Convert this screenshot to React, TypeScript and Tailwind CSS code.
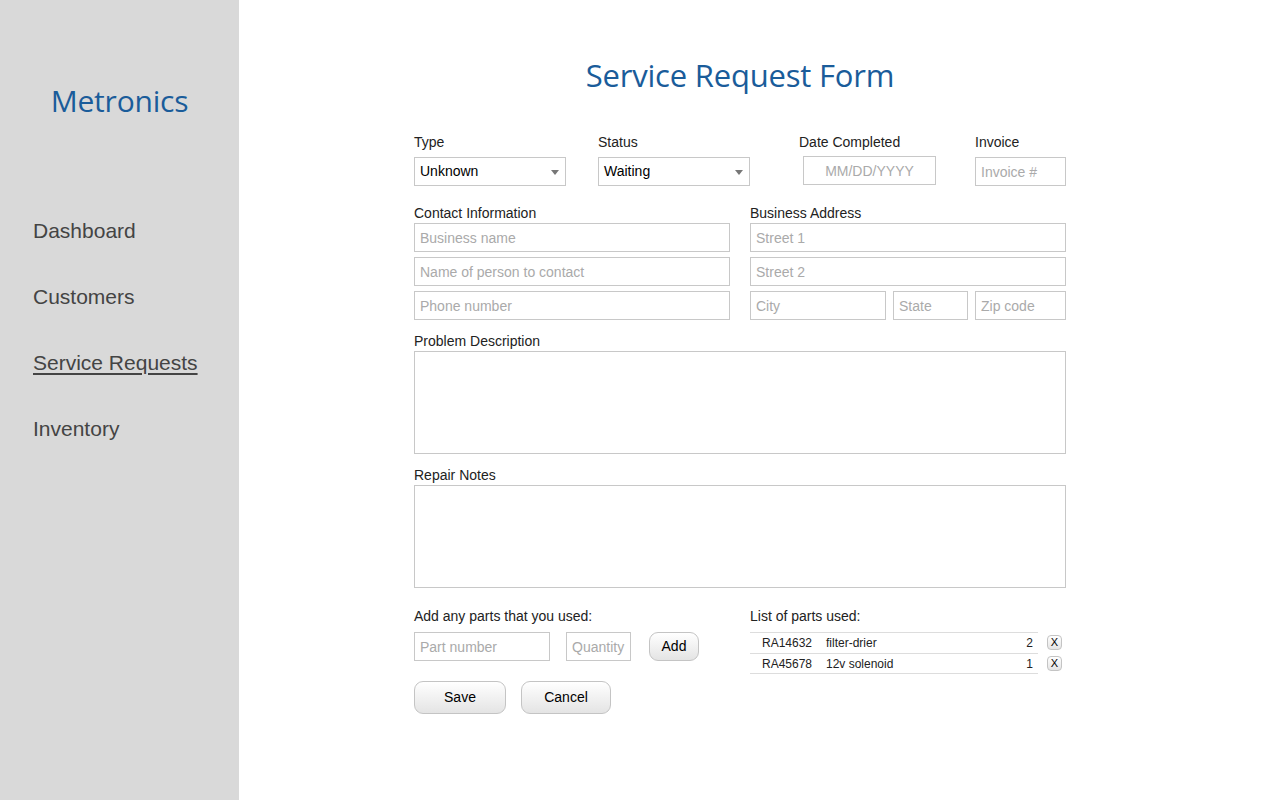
import React from 'react';

const navItems = ['Dashboard', 'Customers', 'Service Requests', 'Inventory'];

const parts = [
  { num: 'RA14632', name: 'filter-drier', qty: 2 },
  { num: 'RA45678', name: '12v solenoid', qty: 1 },
];

const inputCls =
  'h-[29px] border border-[#c8c8c8] bg-white px-[5px] text-[14px] text-[#222] placeholder:text-[#aaa] outline-none';

const Select = ({ value }: { value: string }) => (
  <div className="relative flex h-[29px] w-[152px] items-center border border-[#c8c8c8] bg-white pl-[5px] text-[14px] text-black">
    {value}
    <span className="absolute right-[6px] top-[12px] h-0 w-0 border-x-[4px] border-t-[5px] border-x-transparent border-t-[#777]" />
  </div>
);

const Label = ({ children, className = '' }: { children: React.ReactNode; className?: string }) => (
  <div className={`text-[14px] leading-[16px] text-[#222] ${className}`}>{children}</div>
);

const btnCls =
  'rounded-[9px] border border-[#c4c4c4] bg-gradient-to-b from-white to-[#e4e4e4] text-[14px] text-black';

export default function App() {
  return (
    <div className="flex min-h-[800px] w-full font-['Liberation_Sans',Arial,sans-serif]">
      <aside className="w-[239px] shrink-0 bg-[#d9d9d9]">
        <div className="pt-[82px] text-center font-['Open_Sans',sans-serif] text-[30px] font-medium leading-[38px] tracking-[-0.2px] text-[#1a5c9a]">
          Metronics
        </div>
        <nav className="mt-[99px] flex flex-col gap-[42px] pl-[33px]">
          {navItems.map((n) => (
            <a
              key={n}
              className={`text-[21px] leading-[24px] text-[#444] ${n === 'Service Requests' ? 'underline underline-offset-[3px]' : ''}`}
            >
              {n}
            </a>
          ))}
        </nav>
      </aside>

      <main className="flex-1 bg-white">
        <div className="ml-[175px] w-[652px]">
          <h1 className="pt-[56px] text-center font-['Open_Sans',sans-serif] text-[31px] font-medium leading-[38px] tracking-[-0.2px] text-[#1a5c9a]">
            Service Request Form
          </h1>

          {/* row 1 */}
          <div className="mt-[40px] flex">
            <div className="w-[152px]">
              <Label>Type</Label>
              <div className="mt-[7px]"><Select value="Unknown" /></div>
            </div>
            <div className="ml-[32px] w-[152px]">
              <Label>Status</Label>
              <div className="mt-[7px]"><Select value="Waiting" /></div>
            </div>
            <div className="ml-[49px]">
              <Label>Date Completed</Label>
              <input className={`${inputCls} mt-[6px] ml-[4px] h-[28px] w-[133px] text-center`} placeholder="MM/DD/YYYY" />
            </div>
            <div className="ml-[39px]">
              <Label>Invoice</Label>
              <input className={`${inputCls} mt-[7px] w-[91px]`} placeholder="Invoice #" />
            </div>
          </div>

          {/* contact + address */}
          <div className="mt-[19px] flex gap-[20px]">
            <div className="flex w-[316px] flex-col">
              <Label className="mb-[2px]">Contact Information</Label>
              <div className="flex flex-col gap-[5px]">
                <input className={inputCls} placeholder="Business name" />
                <input className={inputCls} placeholder="Name of person to contact" />
                <input className={inputCls} placeholder="Phone number" />
              </div>
            </div>
            <div className="flex w-[316px] flex-col">
              <Label className="mb-[2px]">Business Address</Label>
              <div className="flex flex-col gap-[5px]">
                <input className={inputCls} placeholder="Street 1" />
                <input className={inputCls} placeholder="Street 2" />
                <div className="flex gap-[7px]">
                  <input className={`${inputCls} w-[136px]`} placeholder="City" />
                  <input className={`${inputCls} w-[75px]`} placeholder="State" />
                  <input className={`${inputCls} w-[91px]`} placeholder="Zip code" />
                </div>
              </div>
            </div>
          </div>

          <Label className="mt-[13px]">Problem Description</Label>
          <textarea className="mt-[2px] block h-[103px] w-full resize-none border border-[#c8c8c8] outline-none" />

          <Label className="mt-[13px]">Repair Notes</Label>
          <textarea className="mt-[2px] block h-[103px] w-full resize-none border border-[#c8c8c8] outline-none" />

          {/* parts */}
          <div className="mt-[20px] flex">
            <div className="w-[336px]">
              <Label>Add any parts that you used:</Label>
              <div className="mt-[8px] flex items-center">
                <input className={`${inputCls} w-[136px]`} placeholder="Part number" />
                <input className={`${inputCls} ml-[16px] w-[65px]`} placeholder="Quantity" />
                <button className={`${btnCls} ml-[18px] h-[29px] w-[50px]`}>Add</button>
              </div>
              <div className="mt-[20px] flex gap-[15px]">
                <button className={`${btnCls} h-[33px] w-[92px]`}>Save</button>
                <button className={`${btnCls} h-[33px] w-[90px]`}>Cancel</button>
              </div>
            </div>
            <div className="w-[316px]">
              <Label>List of parts used:</Label>
              <div className="mt-[8px] flex flex-col">
                {parts.map((p, i) => (
                  <div key={p.num} className="flex items-center">
                    <div
                      className={`flex h-[21px] w-[288px] items-center border-t border-[#ddd] text-[12px] text-[#222] ${i === parts.length - 1 ? 'border-b' : ''}`}
                    >
                      <span className="w-[76px] pl-[12px]">{p.num}</span>
                      <span className="flex-1">{p.name}</span>
                      <span className="pr-[5px]">{p.qty}</span>
                    </div>
                    <button className="ml-[9px] flex h-[15px] w-[15px] items-center justify-center rounded-[4px] border border-[#c4c4c4] bg-gradient-to-b from-white to-[#e4e4e4] text-[11px] leading-none text-black">
                      X
                    </button>
                  </div>
                ))}
              </div>
            </div>
          </div>
        </div>
      </main>
    </div>
  );
}
